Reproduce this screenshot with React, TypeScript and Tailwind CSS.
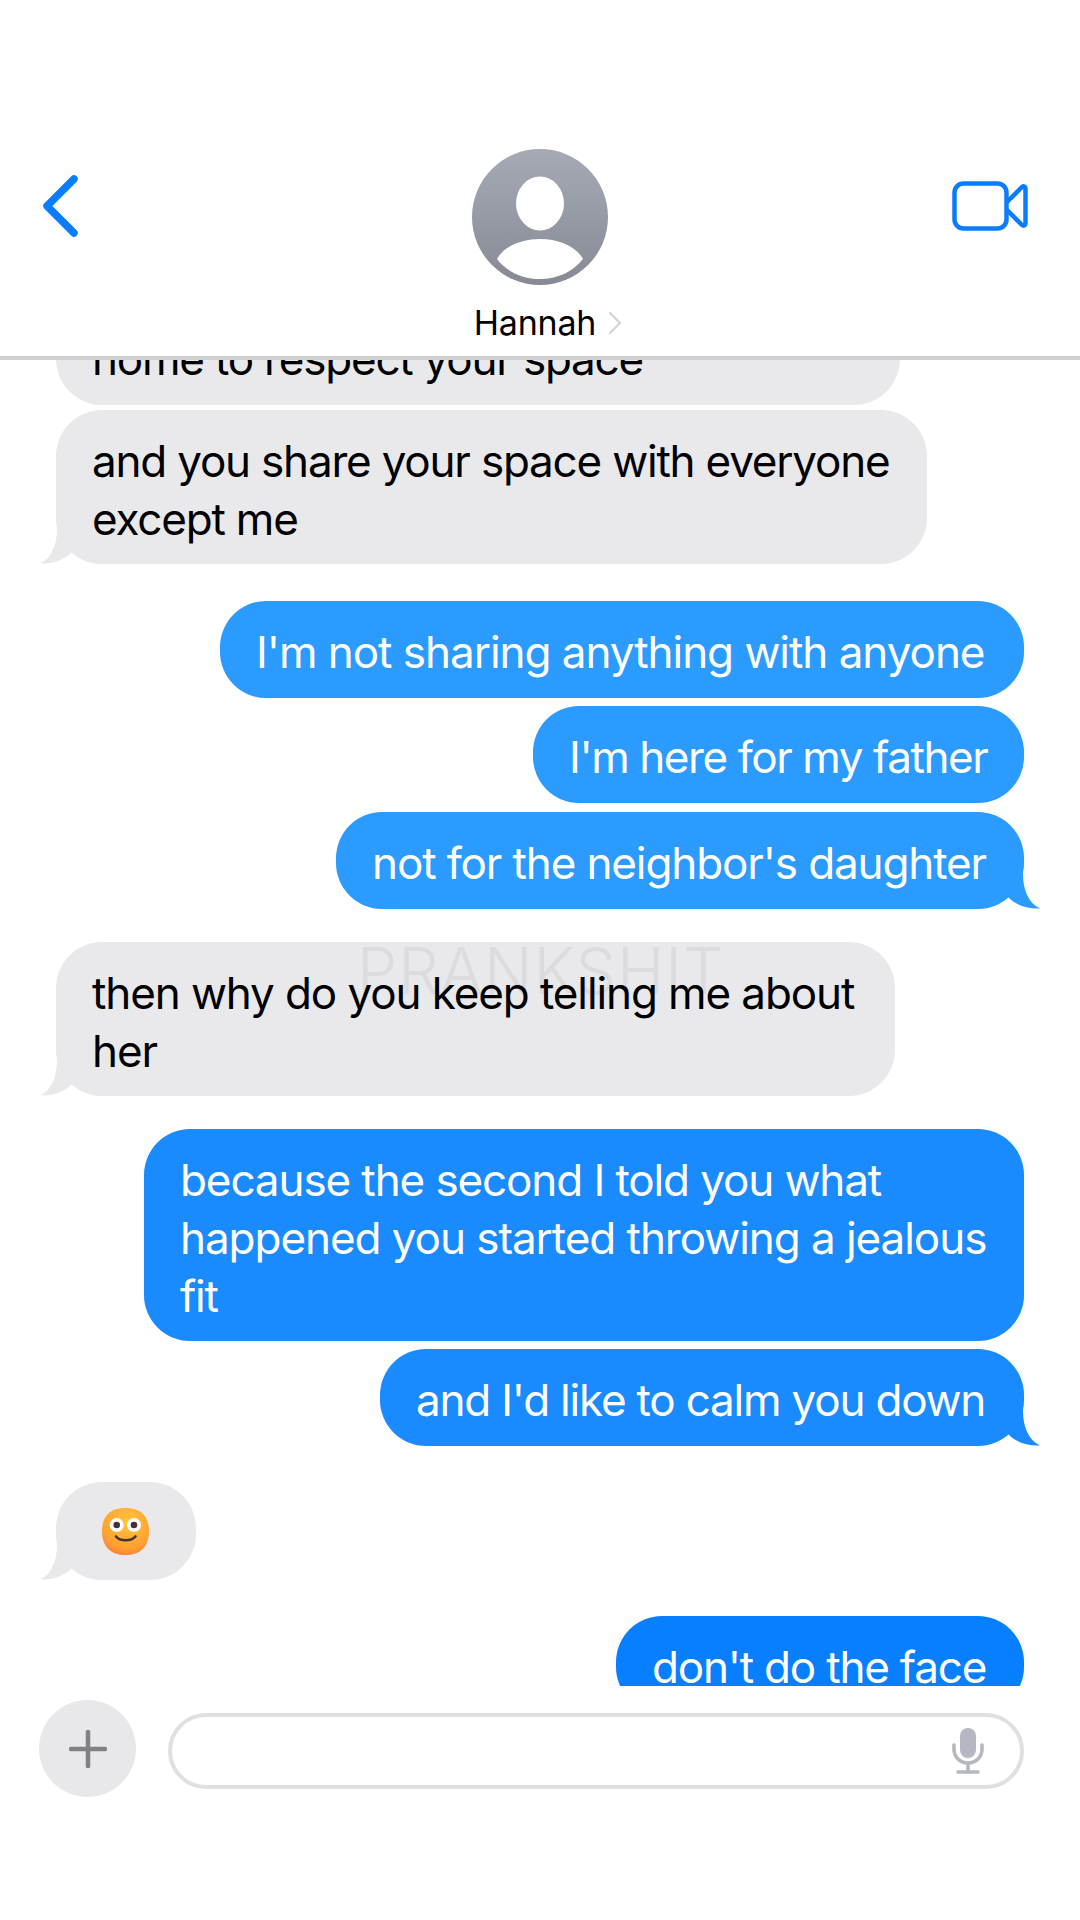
import type { ReactNode } from 'react'

function Tail({ color, side }: { color: string; side: 'left' | 'right' }) {
  return (
    <svg
      viewBox="0 0 60 60"
      className={`absolute bottom-0 w-[60px] h-[60px] ${side === 'left' ? 'left-[-16px]' : 'right-[-16px] -scale-x-100'}`}
    >
      <path d="M17 10 L17 25 C17 40 12 54 0 59.5 C 12 60 23 57 32 48 L50 40 L40 10 Z" fill={color} />
    </svg>
  )
}

function Bubble({
  children,
  className,
  tail,
}: {
  children: ReactNode
  className: string
  tail?: string
}) {
  const incoming = className.includes('self-start')
  return (
    <div className={`relative shrink-0 min-h-[97px] rounded-[46px] px-9 pt-[22px] pb-[16px] text-[44px] leading-[58px] tracking-[-1.2px] whitespace-nowrap ${className}`}>
      {tail && <Tail color={tail} side={incoming ? 'left' : 'right'} />}
      <div className="relative">{children}</div>
    </div>
  )
}

function Avatar() {
  return (
    <svg viewBox="0 0 136 136" className="w-[136px] h-[136px]">
      <defs>
        <linearGradient id="avatarFill" x1="0" y1="0" x2="0" y2="1">
          <stop offset="0" stopColor="#a6aab5" />
          <stop offset="1" stopColor="#868a94" />
        </linearGradient>
      </defs>
      <circle cx="68" cy="68" r="68" fill="url(#avatarFill)" />
      <ellipse cx="68" cy="54.5" rx="24" ry="27" fill="#fff" />
      <path d="M25 110 C32 97 50 90 68 90 C86 90 104 97 111 110 C101 123 85 130 68 130 C51 130 35 123 25 110 Z" fill="#fff" />
    </svg>
  )
}

function FaceEmoji() {
  return (
    <svg viewBox="0 0 47 47" className="w-[47px] h-[47px]">
      <defs>
        <radialGradient id="faceFill" cx="0.55" cy="0.3" r="0.8">
          <stop offset="0" stopColor="#ffc53c" />
          <stop offset="0.7" stopColor="#ffa030" />
          <stop offset="0.95" stopColor="#fb7a3e" />
          <stop offset="1" stopColor="#f2688a" />
        </radialGradient>
      </defs>
      <path d="M23.5 0 C39 0 47 8 47 23 C47 39 38 47 23.5 47 C9 47 0 39 0 23 C0 8 8 0 23.5 0 Z" fill="url(#faceFill)" />
      <circle cx="14.7" cy="17" r="7" fill="#fff" />
      <circle cx="32" cy="17" r="7" fill="#fff" />
      <circle cx="14.7" cy="17" r="3.3" fill="#43303a" />
      <circle cx="32" cy="17" r="3.3" fill="#43303a" />
      <path d="M14 28.5 C18 33.5 29 33.5 33.5 28.5" fill="none" stroke="#43303a" strokeWidth="2.6" strokeLinecap="round" />
    </svg>
  )
}

export default function App() {
  const gray = 'self-start bg-[#e9e9eb] text-black'

  return (
    <div className="w-[1080px] h-[1920px] bg-white flex flex-col overflow-hidden font-['Inter',sans-serif]">
      {/* Header */}
      <header className="h-[360px] shrink-0 border-b-4 border-[#d1d1d3] grid grid-cols-[1fr_auto_1fr]">
        <div className="pl-[42px] pt-[175px]">
          <svg viewBox="0 0 36 62" className="w-[36px] h-[62px]" fill="none" stroke="#0a7dff" strokeWidth="7.5" strokeLinecap="round" strokeLinejoin="round">
            <path d="M32 4 L5 31 L32 58" />
          </svg>
        </div>
        <div className="pt-[149px] flex flex-col items-center">
          <Avatar />
          <div className="mt-[18px] ml-[16px] flex items-center text-[34px] leading-[40px] tracking-[-0.2px] text-black whitespace-nowrap">
            Hannah
            <svg viewBox="0 0 14 24" className="w-[14px] h-[24px] ml-[12px]" fill="none" stroke="#d3d3d6" strokeWidth="2" strokeLinecap="round" strokeLinejoin="round">
              <path d="M2 2 L12 12 L2 22" />
            </svg>
          </div>
        </div>
        <div className="flex justify-end pr-[52px] pt-[181px]">
          <svg viewBox="0 0 76 50" className="w-[76px] h-[50px]" fill="none" stroke="#0a7dff" strokeWidth="4.5" strokeLinejoin="round">
            <rect x="2.5" y="2.5" width="52" height="45" rx="9" />
            <path d="M55 21 L70 6 C71.5 4.8 73.5 5.5 73.5 7.5 L73.5 42.5 C73.5 44.5 71.5 45.2 70 44 L55 29" />
          </svg>
        </div>
      </header>

      {/* Messages */}
      <main className="h-[1326px] shrink-0 overflow-hidden flex flex-col px-[56px]">
        <Bubble className={`${gray} w-[844px] mt-[-52px]`}>home to respect your space</Bubble>
        <Bubble className={`${gray} w-[871px] mt-[5px]`} tail="#e9e9eb">
          and you share your space with everyone
          <br />
          except me
        </Bubble>

        <Bubble className="self-end bg-[#2b9bff] text-white w-[804px] mt-[37px]">
          <span className="tracking-[-1.03px]">I'm not sharing anything with anyone</span>
        </Bubble>
        <Bubble className="self-end bg-[#2b9bff] text-white w-[491px] mt-[8px]">
          <span className="tracking-[-1.42px]">I'm here for my father</span>
        </Bubble>
        <Bubble className="self-end bg-[#2b9bff] text-white w-[688px] mt-[9px]" tail="#2b9bff">
          <span className="tracking-[-1.12px]">not for the neighbor's daughter</span>
        </Bubble>

        <Bubble className={`${gray} w-[839px] mt-[33px]`} tail="#e9e9eb">
          <span className="absolute left-[265px] top-[-31px] text-[64px] leading-[76px] font-light tracking-[1px] text-[#dcdcde]">PRANKSHIT</span>
          <span className="relative tracking-[-1.1px]">
            then why do you keep telling me about
            <br />
            her
          </span>
        </Bubble>

        <Bubble className="self-end bg-[#1a8aff] text-white w-[880px] mt-[33px]">
          <span className="tracking-[-1.1px]">because the second I told you what</span>
          <br />
          <span className="tracking-[-1.05px]">happened you started throwing a jealous</span>
          <br />
          fit
        </Bubble>
        <Bubble className="self-end bg-[#1a8aff] text-white w-[644px] mt-[8px]" tail="#1a8aff">and I'd like to calm you down</Bubble>

        <div className="self-start shrink-0 relative mt-[36px] w-[140px] h-[98px] rounded-[46px] bg-[#e9e9eb] flex items-center justify-center pr-[2px]">
          <Tail color="#e9e9eb" side="left" />
          <div className="relative">
            <FaceEmoji />
          </div>
        </div>

        <Bubble className="self-end bg-[#087fff] text-white w-[408px] mt-[36px]">don't do the face</Bubble>
      </main>

      {/* Composer */}
      <footer className="flex-1 flex items-start gap-[32px] pl-[39px] pt-[14px]">
        <div className="w-[97px] h-[97px] rounded-full bg-[#e8e8ea] flex items-center justify-center">
          <svg viewBox="0 0 38 38" className="w-[38px] h-[38px]" fill="none" stroke="#808185" strokeWidth="4.5" strokeLinecap="round">
            <path d="M19 2 V36 M2 19 H36" />
          </svg>
        </div>
        <div className="mt-[13px] w-[856px] h-[76px] rounded-full border-4 border-[#e0e0e2] bg-white flex items-center justify-end pr-[36px]">
          <svg viewBox="0 0 32 46" className="w-[32px] h-[46px]" fill="none">
            <rect x="8" y="0" width="16" height="30" rx="8" fill="#b5b8c0" />
            <path d="M2 17 V21 C2 29 8 35 16 35 C24 35 30 29 30 21 V17" stroke="#b5b8c0" strokeWidth="3.6" strokeLinecap="round" />
            <path d="M16 35 V43 M6 44 H26" stroke="#b5b8c0" strokeWidth="3.6" strokeLinecap="round" />
          </svg>
        </div>
      </footer>
    </div>
  )
}
